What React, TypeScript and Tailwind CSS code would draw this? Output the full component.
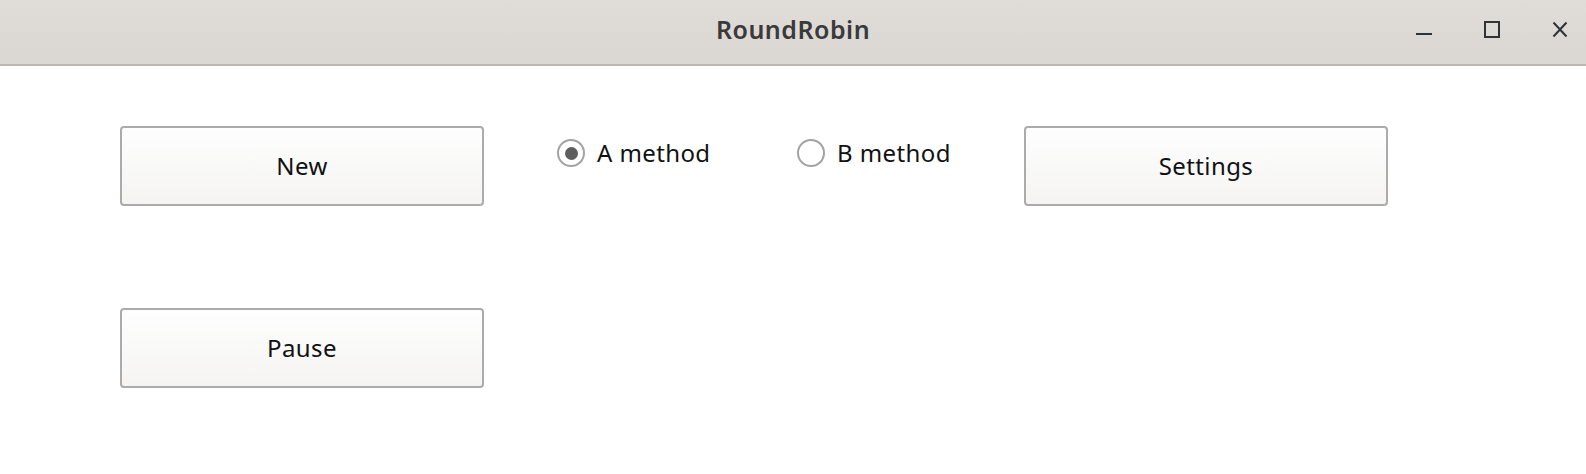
import { useState } from "react";

const FONT = { fontFamily: '"Noto Sans", "Open Sans", sans-serif' };

function WindowControls() {
  return (
    <div className="flex h-[64px] items-start gap-[52px] pt-[21px] pr-[18px]">
      <button type="button" aria-label="Minimize" className="h-[17px] w-[16px]">
        <svg width="16" height="17" viewBox="0 0 16 17">
          <rect x="0" y="12" width="16" height="2" fill="#2e3436" />
        </svg>
      </button>
      <button type="button" aria-label="Maximize" className="h-[17px] w-[16px]">
        <svg width="16" height="17" viewBox="0 0 16 17">
          <rect x="1" y="1" width="14" height="15" fill="none" stroke="#2e3436" strokeWidth="2" />
        </svg>
      </button>
      <button type="button" aria-label="Close" className="h-[17px] w-[16px]">
        <svg width="16" height="17" viewBox="0 0 16 17">
          <path d="M1.5 1.5 L14.5 15.5 M14.5 1.5 L1.5 15.5" stroke="#2e3436" strokeWidth="2" />
        </svg>
      </button>
    </div>
  );
}

function PushButton({ label }: { label: string }) {
  return (
    <button
      type="button"
      className="flex h-[80px] w-[364px] items-center justify-center rounded-[4px] border-2 border-[#ababab] bg-gradient-to-b from-[#fefefe] to-[#f5f4f3] text-[24px] tracking-[0.4px] text-[#111]"
    >
      {label}
    </button>
  );
}

function Radio({ label, checked, onSelect, width }: { label: string; checked: boolean; onSelect: () => void; width: string }) {
  return (
    <label className={`flex h-[28px] cursor-pointer items-center gap-3 ${width}`} onClick={onSelect}>
      <span className="grid h-[28px] w-[28px] place-items-center rounded-full border-2 border-[#a3a3a3] bg-white">
        {checked && <span className="h-[13px] w-[13px] rounded-full bg-[#5e5e5e]" />}
      </span>
      <span className="text-[24px] leading-none tracking-[0.4px] text-[#111]">{label}</span>
    </label>
  );
}

export default function App() {
  const [method, setMethod] = useState<"A" | "B">("A");

  return (
    <div className="flex h-[474px] w-[1586px] flex-col bg-white" style={FONT}>
      <header className="relative flex h-[66px] shrink-0 items-start justify-end border-b-2 border-[#bdb6ae] bg-gradient-to-b from-[#e0dcd8] to-[#dad6d1]">
        <h1 className="absolute inset-x-0 top-0 flex h-[60px] items-center justify-center text-[25px] font-semibold tracking-[0.5px] text-[#3a3a3a]">
          RoundRobin
        </h1>
        <div className="relative">
          <WindowControls />
        </div>
      </header>

      <main className="flex flex-col gap-[102px] pl-[120px] pt-[60px]">
        <div className="flex items-start">
          <PushButton label="New" />
          <div className="ml-[73px] mt-[13px] flex">
            <Radio label="A method" checked={method === "A"} onSelect={() => setMethod("A")} width="w-[240px]" />
            <Radio label="B method" checked={method === "B"} onSelect={() => setMethod("B")} width="w-[227px]" />
          </div>
          <PushButton label="Settings" />
        </div>
        <div className="flex">
          <PushButton label="Pause" />
        </div>
      </main>
    </div>
  );
}
